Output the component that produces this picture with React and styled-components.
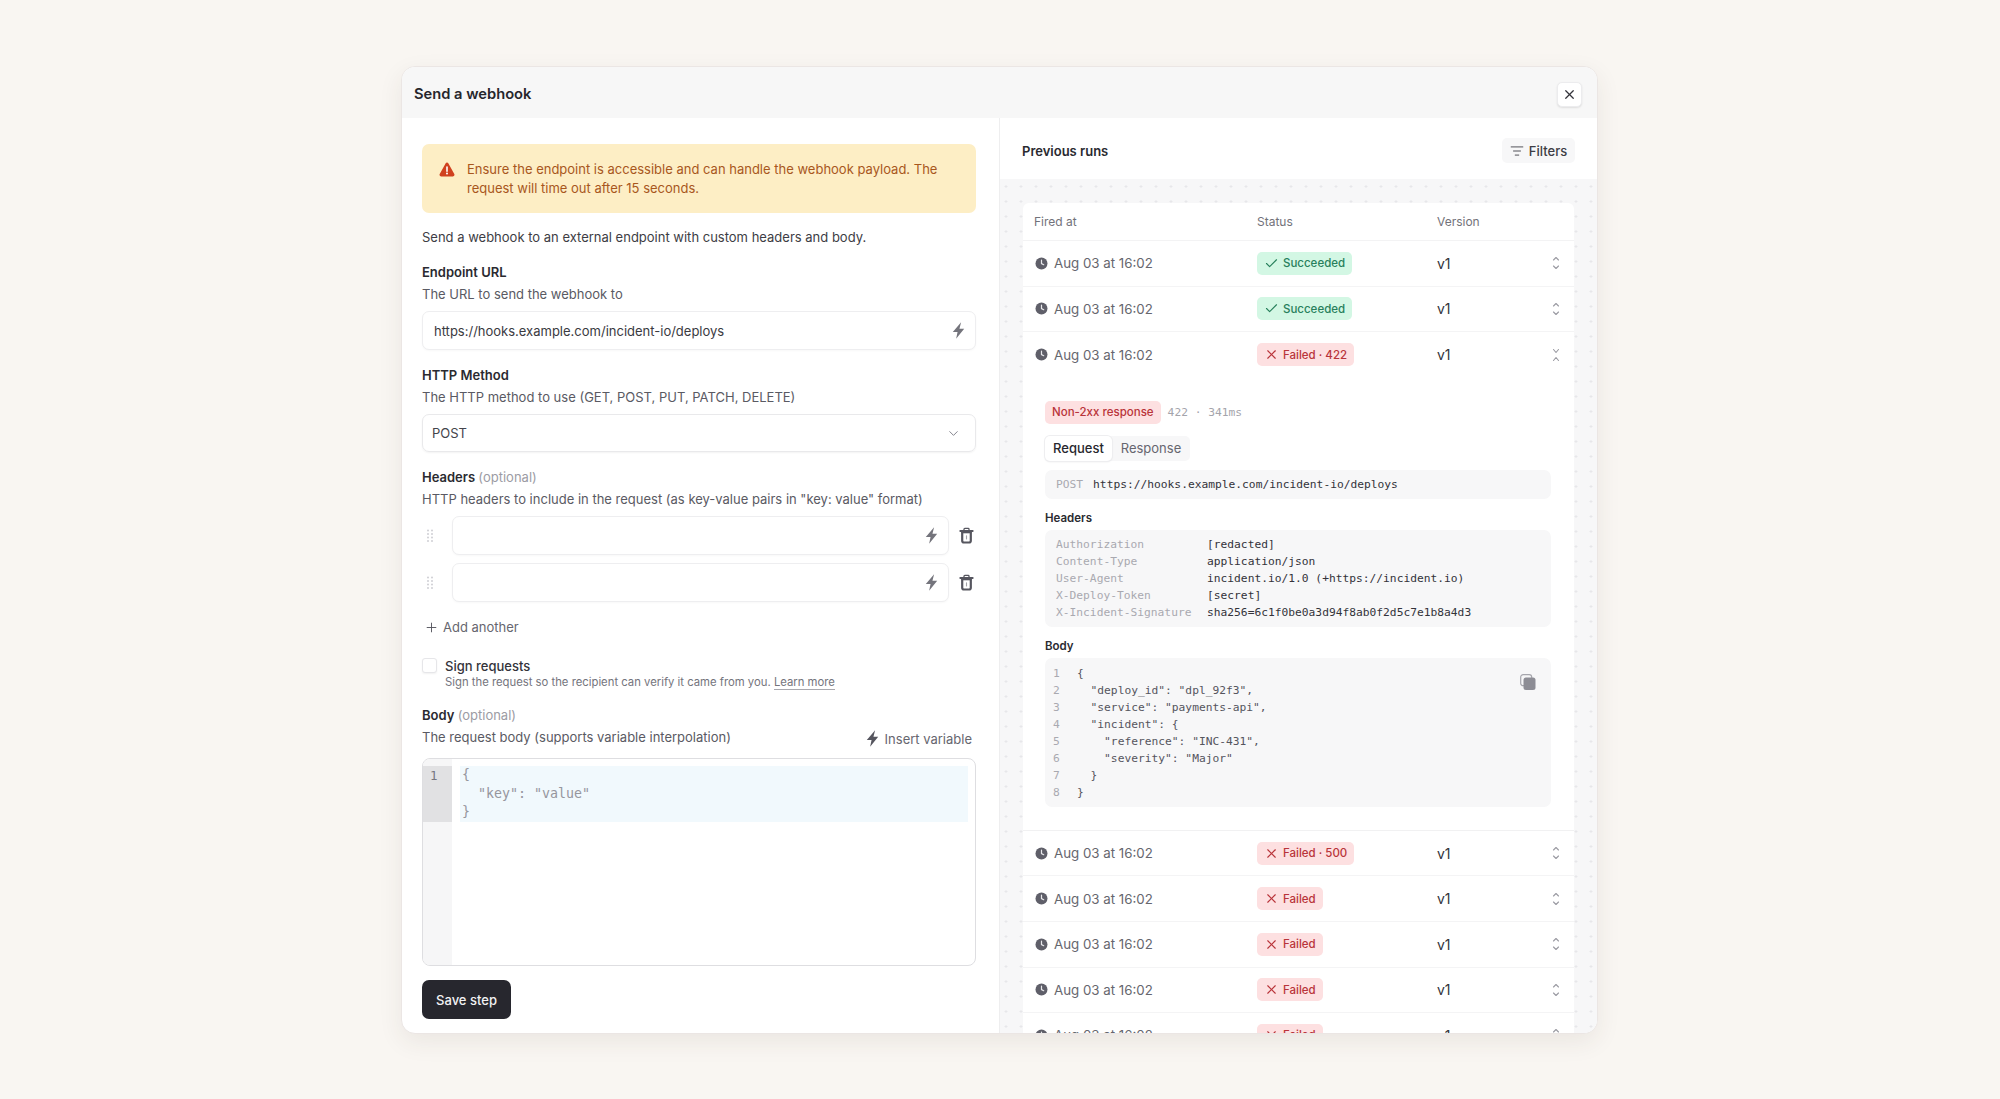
import React from 'react'
import styled, { createGlobalStyle } from 'styled-components'
import { X, Check, Plus, ChevronDown, ListFilter } from 'lucide-react'

const Global = createGlobalStyle`
  * { box-sizing: border-box; }
  html, body { margin: 0; padding: 0; height: 100%; }
  body {
    background: #f9f6f2;
    font-family: Inter, "Noto Sans", sans-serif;
    color: #2a2a30;
  }
`

const BODY_LINES = [
  '{',
  '  "deploy_id": "dpl_92f3",',
  '  "service": "payments-api",',
  '  "incident": {',
  '    "reference": "INC-431",',
  '    "severity": "Major"',
  '  }',
  '}',
]

const HEADER_ROWS = [
  ['Authorization', '[redacted]'],
  ['Content-Type', 'application/json'],
  ['User-Agent', 'incident.io/1.0 (+https://incident.io)'],
  ['X-Deploy-Token', '[secret]'],
  ['X-Incident-Signature', 'sha256=6c1f0be0a3d94f8ab0f2d5c7e1b8a4d3'],
]

function Bolt({ size = 19, color = '#74747c' }) {
  return (
    <svg width={size} height={size} viewBox="0 0 16 16" fill={color}>
      <path d="M10.2 1 3.2 9.3h4L6 15l6.8-8.4H8.8z" />
    </svg>
  )
}

function Trash() {
  return (
    <svg width="15" height="17" viewBox="0 0 15 17" fill="none" stroke="#56565f">
      <path d="M1.3 4h12.4" strokeWidth="1.9" strokeLinecap="round" />
      <path d="M5 3.4V2.2c0-.5.4-.8.8-.8h3.4c.4 0 .8.3.8.8v1.2" strokeWidth="1.3" />
      <path d="M3.2 5v8.8c0 1 .7 1.7 1.7 1.7h5.2c1 0 1.7-.7 1.7-1.7V5" strokeWidth="2.2" />
      <path d="M2.5 5.5h10" strokeWidth="1.6" />
      <path d="M7.5 8.4v4" strokeWidth="1.1" opacity=".55" />
    </svg>
  )
}

function Clock() {
  return (
    <svg width="13" height="13" viewBox="0 0 13 13">
      <circle cx="6.5" cy="6.5" r="6" fill="#5f5f69" />
      <path d="M6.5 3.2v3.4l2.2 1.1" fill="none" stroke="#e9e9ec" strokeWidth="1.2" strokeLinecap="round" />
    </svg>
  )
}

function Warning() {
  return (
    <svg width="16" height="15" viewBox="0 0 16 15">
      <path d="M6.7 1.2a1.5 1.5 0 0 1 2.6 0l6 10.9c.6 1-.2 2.3-1.3 2.3H2c-1.1 0-1.9-1.3-1.3-2.3z" fill="#d0411f" />
      <path d="M8 5v4.3" stroke="#fff" strokeWidth="1.6" strokeLinecap="round" />
      <circle cx="8" cy="11.6" r="1" fill="#fff" />
    </svg>
  )
}

function Expand({ open }) {
  return (
    <svg width="10" height="14" viewBox="0 0 10 14" fill="none" stroke="#9a9aa2" strokeWidth="1.1" strokeLinecap="round" strokeLinejoin="round">
      {open ? <path d="M2.5 1.5 5 4.5l2.5-3M2.5 12.5 5 9.5l2.5 3" /> : <path d="M2.5 4 5 1.5 7.5 4M2.5 10 5 12.5 7.5 10" />}
    </svg>
  )
}

function Grip() {
  return (
    <svg width="8" height="14" viewBox="0 0 8 14" fill="#cfcfd4">
      {[1.5, 5, 8.5, 12].map((y) => (
        <React.Fragment key={y}>
          <circle cx="2" cy={y} r="1" />
          <circle cx="6" cy={y} r="1" />
        </React.Fragment>
      ))}
    </svg>
  )
}

function Copy() {
  return (
    <svg width="18" height="18" viewBox="0 0 18 18">
      <rect x="1.7" y="1.7" width="11" height="11" rx="2.5" fill="none" stroke="#a6a6ad" strokeWidth="1.2" />
      <rect x="4.5" y="4.5" width="12" height="12.5" rx="2.5" fill="#8d8d95" />
    </svg>
  )
}

function Row({ kind, label, open }) {
  return (
    <RunRow $open={open}>
      <FiredAt><Clock />Aug 03 at 16:02</FiredAt>
      <div>
        <Badge $kind={kind}>
          {kind === 'ok' ? <Check size={15} strokeWidth={1.8} /> : <X size={15} strokeWidth={1.8} />}
          {label}
        </Badge>
      </div>
      <VersionCell>v1</VersionCell>
      <ExpandCell><Expand open={open} /></ExpandCell>
    </RunRow>
  )
}

export default function App() {
  return (
    <>
      <Global />
      <Page>
        <Modal>
          <ModalHeader>
            <ModalTitle>Send a webhook</ModalTitle>
            <CloseButton><X size={15} strokeWidth={2} /></CloseButton>
          </ModalHeader>
          <Columns>
            <FormColumn>
              <Alert>
                <AlertIcon><Warning /></AlertIcon>
                <span>Ensure the endpoint is accessible and can handle the webhook payload. The request will time out after 15 seconds.</span>
              </Alert>
              <Intro>Send a webhook to an external endpoint with custom headers and body.</Intro>

              <Label $top={15}>Endpoint URL</Label>
              <Help>The URL to send the webhook to</Help>
              <Input $top={7}>
                https://hooks.example.com/incident-io/deploys
                <Bolt />
              </Input>

              <Label $top={15}>HTTP Method</Label>
              <Help>The HTTP method to use (GET, POST, PUT, PATCH, DELETE)</Help>
              <Select>
                POST
                <ChevronDown size={15} color="#7c7c85" strokeWidth={1.5} />
              </Select>

              <Label $top={15}>Headers <Optional>(optional)</Optional></Label>
              <Help>HTTP headers to include in the request (as key-value pairs in "key: value" format)</Help>
              <HeaderRows>
                {[0, 1].map((i) => (
                  <HeaderRow key={i}>
                    <Grip />
                    <Input $flat><span /><Bolt /></Input>
                    <Trash />
                  </HeaderRow>
                ))}
              </HeaderRows>
              <AddAnother><Plus size={15} strokeWidth={1.5} color="#55555e" />Add another</AddAnother>

              <SignRow>
                <Checkbox />
                <div>
                  <SignLabel>Sign requests</SignLabel>
                  <SignHelp>Sign the request so the recipient can verify it came from you. <LearnMore>Learn more</LearnMore></SignHelp>
                </div>
              </SignRow>

              <Label $top={15}>Body <Optional>(optional)</Optional></Label>
              <BodyHelpRow>
                <Help $top={0}>The request body (supports variable interpolation)</Help>
                <InsertVariable><Bolt color="#55555e" />Insert variable</InsertVariable>
              </BodyHelpRow>
              <Editor>
                <Gutter>
                  <GutterActive>1</GutterActive>
                </Gutter>
                <EditorContent>
                  <ActiveBand>{'{\n  "key": "value"\n}'}</ActiveBand>
                </EditorContent>
              </Editor>
              <SaveButton>Save step</SaveButton>
            </FormColumn>

            <RunsColumn>
              <RunsHeader>
                <RunsTitle>Previous runs</RunsTitle>
                <FiltersButton><ListFilter size={14} strokeWidth={1.5} />Filters</FiltersButton>
              </RunsHeader>
              <RunsBody>
                <RunsCard>
                  <TableHead>
                    <span>Fired at</span>
                    <span>Status</span>
                    <span>Version</span>
                  </TableHead>
                  <Row kind="ok" label="Succeeded" />
                  <Row kind="ok" label="Succeeded" />
                  <Row kind="fail" label="Failed · 422" open />
                  <Detail>
                    <DetailMeta>
                      <Badge $kind="fail">Non-2xx response</Badge>
                      <MetaText>422 · 341ms</MetaText>
                    </DetailMeta>
                    <Tabs>
                      <Tab $active>Request</Tab>
                      <Tab>Response</Tab>
                    </Tabs>
                    <UrlBox><UrlMethod>POST</UrlMethod>https://hooks.example.com/incident-io/deploys</UrlBox>
                    <SectionLabel>Headers</SectionLabel>
                    <HeadersBox>
                      {HEADER_ROWS.map(([k, v]) => (
                        <React.Fragment key={k}>
                          <Muted>{k}</Muted>
                          <span>{v}</span>
                        </React.Fragment>
                      ))}
                    </HeadersBox>
                    <SectionLabel>Body</SectionLabel>
                    <BodyBox>
                      {BODY_LINES.map((line, i) => (
                        <React.Fragment key={i}>
                          <Muted>{i + 1}</Muted>
                          <BodyLine>{line}</BodyLine>
                        </React.Fragment>
                      ))}
                      <CopyButton><Copy /></CopyButton>
                    </BodyBox>
                  </Detail>
                  <Row kind="fail" label="Failed · 500" />
                  <Row kind="fail" label="Failed" />
                  <Row kind="fail" label="Failed" />
                  <Row kind="fail" label="Failed" />
                  <Row kind="fail" label="Failed" />
                </RunsCard>
              </RunsBody>
            </RunsColumn>
          </Columns>
        </Modal>
      </Page>
    </>
  )
}

const Page = styled.div`
  height: 1099px;
  padding: 66px 1px 0 0;
  display: flex;
  justify-content: center;
  align-items: flex-start;
  overflow: hidden;
`
const Modal = styled.div`
  width: 1197px;
  height: 968px;
  background: #fff;
  border: 1px solid #ebe6e4;
  border-radius: 14px;
  box-shadow: 0 8px 24px rgba(60, 50, 40, 0.08);
  overflow: hidden;
  display: flex;
  flex-direction: column;
`
const ModalHeader = styled.div`
  height: 51px;
  flex: none;
  background: #f7f7f7;
  display: flex;
  align-items: center;
  justify-content: space-between;
  padding: 3px 15px 0 12px;
`
const ModalTitle = styled.div`
  font-size: 14.7px;
  font-weight: 600;
  color: #26262c;
`
const CloseButton = styled.div`
  width: 25px;
  height: 25px;
  background: #fff;
  border: 1px solid #ececee;
  border-radius: 5px;
  box-shadow: 0 1px 2px rgba(0, 0, 0, 0.1);
  display: flex;
  align-items: center;
  justify-content: center;
  color: #33333a;
`
const Columns = styled.div`
  flex: 1;
  min-height: 0;
  display: grid;
  grid-template-columns: 598px 1fr;
`
const FormColumn = styled.div`
  padding: 26px 23px 0 20px;
  border-right: 1px solid #eeeeef;
  display: flex;
  flex-direction: column;
`
const Alert = styled.div`
  height: 69px;
  flex: none;
  background: #fdeec5;
  border-radius: 7px;
  padding: 16px 30px 0 45px;
  position: relative;
  font-size: 13px;
  line-height: 19px;
  color: #a8571d;
`
const AlertIcon = styled.div`
  position: absolute;
  left: 17px;
  top: 18px;
  display: flex;
`
const Intro = styled.div`
  margin-top: 14px;
  font-size: 13px;
  line-height: 20px;
  color: #3d3d44;
`
const Label = styled.div`
  margin-top: ${(p) => p.$top}px;
  font-size: 13px;
  line-height: 20px;
  font-weight: 600;
  color: #2a2a30;
`
const Optional = styled.span`
  font-weight: 400;
  color: #9c9ca4;
`
const Help = styled.div`
  margin-top: ${(p) => p.$top ?? 2}px;
  font-size: 13px;
  line-height: 20px;
  color: #5a5a63;
`
const Input = styled.div`
  margin-top: ${(p) => p.$top ?? 0}px;
  height: 39px;
  flex: ${(p) => (p.$flat ? 1 : 'none')};
  background: #fff;
  border: 1px solid #eeeef0;
  border-radius: 7px;
  box-shadow: 0 1px 2px rgba(0, 0, 0, 0.03);
  display: flex;
  align-items: center;
  justify-content: space-between;
  padding: 0 7px 0 11px;
  font-size: 13px;
  color: #3a3a41;
`
const Select = styled.div`
  margin-top: 7px;
  height: 38px;
  flex: none;
  border: 1px solid #e9e9eb;
  border-radius: 7px;
  box-shadow: 0 1px 2px rgba(0, 0, 0, 0.05);
  display: flex;
  align-items: center;
  justify-content: space-between;
  padding: 0 14px 0 9px;
  font-size: 13px;
  color: #44444b;
`
const HeaderRows = styled.div`
  margin-top: 7px;
  display: flex;
  flex-direction: column;
  gap: 8px;
`
const HeaderRow = styled.div`
  display: flex;
  align-items: center;
  padding-left: 4px;
  & > svg:first-child { margin-right: 18px; }
  & > svg:last-child { margin-left: 10px; margin-right: 2px; }
`
const AddAnother = styled.div`
  margin-top: 15px;
  padding-left: 2px;
  display: flex;
  align-items: center;
  gap: 4px;
  font-size: 13px;
  line-height: 20px;
  color: #66666f;
`
const SignRow = styled.div`
  margin-top: 19px;
  display: flex;
  gap: 8px;
`
const Checkbox = styled.div`
  width: 15px;
  height: 15px;
  margin-top: 2px;
  border: 1px solid #e6e6e9;
  border-radius: 3px;
  background: #fff;
  box-shadow: 0 1px 2px rgba(0, 0, 0, 0.06);
`
const SignLabel = styled.div`
  font-size: 13px;
  line-height: 20px;
  font-weight: 500;
  color: #33333a;
`
const SignHelp = styled.div`
  margin-top: -2px;
  font-size: 11.3px;
  line-height: 16px;
  color: #74747c;
`
const LearnMore = styled.span`
  border-bottom: 1px solid #a8a8ae;
`
const BodyHelpRow = styled.div`
  margin-top: 2px;
  display: flex;
  justify-content: space-between;
  align-items: flex-start;
`
const InsertVariable = styled.div`
  display: flex;
  align-items: center;
  gap: 3px;
  padding: 2px 4px 0 0;
  font-size: 13px;
  color: #66666f;
`
const Editor = styled.div`
  margin-top: 10px;
  height: 208px;
  flex: none;
  border: 1px solid #dedee1;
  border-radius: 8px;
  overflow: hidden;
  display: flex;
`
const Gutter = styled.div`
  width: 29px;
  background: #f6f6f7;
  padding-top: 7px;
`
const GutterActive = styled.div`
  height: 56px;
  background: #e1e1e3;
  padding-left: 7px;
  font-family: "DejaVu Sans Mono", monospace;
  font-size: 12.5px;
  line-height: 19px;
  color: #77777f;
`
const EditorContent = styled.div`
  flex: 1;
  padding: 7px 7px 0 8px;
`
const ActiveBand = styled.pre`
  margin: 0;
  height: 56px;
  background: #f1f9fd;
  padding-left: 2px;
  font-family: "DejaVu Sans Mono", monospace;
  font-size: 13.3px;
  line-height: 18.6px;
  color: #96969d;
`
const SaveButton = styled.div`
  margin-top: 14px;
  width: 89px;
  height: 39px;
  flex: none;
  background: #27272e;
  border-radius: 7px;
  display: flex;
  align-items: center;
  justify-content: center;
  font-size: 13px;
  font-weight: 500;
  color: #f2f2f3;
`
const RunsColumn = styled.div`
  min-width: 0;
  display: flex;
  flex-direction: column;
  overflow: hidden;
`
const RunsHeader = styled.div`
  height: 61px;
  flex: none;
  display: flex;
  align-items: center;
  justify-content: space-between;
  padding: 4px 22px 0 22px;
`
const RunsTitle = styled.div`
  font-size: 13px;
  font-weight: 600;
  color: #2a2a30;
`
const FiltersButton = styled.div`
  width: 73px;
  height: 25px;
  background: #f7f7f8;
  border-radius: 5px;
  display: flex;
  align-items: center;
  justify-content: center;
  gap: 5px;
  font-size: 13px;
  font-weight: 500;
  color: #3d3d44;
`
const RunsBody = styled.div`
  flex: 1;
  min-height: 0;
  overflow: hidden;
  padding: 24px 23px 0 23px;
  background-color: #f7f7f8;
  background-image: radial-gradient(circle, #e7e7ea 1px, transparent 1.4px);
  background-size: 15px 15px;
  background-position: -1.5px 0;
`
const RunsCard = styled.div`
  background: #fff;
  border-radius: 6px 6px 0 0;
`
const TableHead = styled.div`
  height: 38px;
  display: grid;
  grid-template-columns: 223px 180px 1fr;
  align-items: center;
  padding-left: 11px;
  border-bottom: 1px solid #f3f3f4;
  font-size: 12px;
  color: #72727a;
`
const RunRow = styled.div`
  height: 45.6px;
  display: grid;
  grid-template-columns: 223px 180px 1fr 20px;
  align-items: center;
  padding: 0 8px 0 11px;
  border-bottom: ${(p) => (p.$open ? 'none' : '1px solid #f4f4f5')};
`
const FiredAt = styled.div`
  display: flex;
  align-items: center;
  gap: 6px;
  padding-left: 1px;
  font-size: 13.3px;
  color: #66666e;
`
const Badge = styled.span`
  display: inline-flex;
  align-items: center;
  gap: 4px;
  height: 23px;
  border-radius: 5px;
  padding: 0 7px;
  font-size: 11.5px;
  font-weight: 500;
  background: ${(p) => (p.$kind === 'ok' ? '#d3f7e4' : '#fde0e1')};
  color: ${(p) => (p.$kind === 'ok' ? '#28805c' : '#b9343a')};
`
const VersionCell = styled.div`
  font-size: 14px;
  color: #33333a;
`
const ExpandCell = styled.div`
  display: flex;
  justify-content: center;
`
const Detail = styled.div`
  padding: 23px 23px 23px 22px;
  border-bottom: 1px solid #f1f1f2;
`
const DetailMeta = styled.div`
  display: flex;
  align-items: center;
  gap: 7px;
`
const MetaText = styled.span`
  font-family: "DejaVu Sans Mono", monospace;
  font-size: 11.25px;
  color: #a4a4ab;
`
const Tabs = styled.div`
  margin-top: 12px;
  width: 145px;
  height: 25px;
  display: flex;
  background: #f7f7f8;
  border-radius: 5px;
`
const Tab = styled.div`
  flex: none;
  width: ${(p) => (p.$active ? '67px' : '78px')};
  display: flex;
  align-items: center;
  justify-content: center;
  border-radius: 5px;
  font-size: 13px;
  font-weight: ${(p) => (p.$active ? 500 : 400)};
  color: ${(p) => (p.$active ? '#27272e' : '#66666f')};
  background: ${(p) => (p.$active ? '#fff' : 'transparent')};
  box-shadow: ${(p) => (p.$active ? '0 0 0 1px #eeeef0, 0 1px 2px rgba(0,0,0,.1)' : 'none')};
`
const monoBox = `
  background: #f7f7f8;
  border-radius: 7px;
  font-family: "DejaVu Sans Mono", monospace;
  font-size: 11.25px;
  line-height: 17px;
  color: #33333a;
`
const UrlBox = styled.div`
  ${monoBox}
  margin-top: 9px;
  height: 29px;
  padding: 6px 11px;
  white-space: pre;
`
const Muted = styled.span`
  color: #a9a9b0;
`
const UrlMethod = styled(Muted)`
  margin-right: 10px;
`
const SectionLabel = styled.div`
  margin-top: 10px;
  font-size: 11.5px;
  line-height: 18px;
  font-weight: 600;
  color: #2a2a30;
`
const HeadersBox = styled.div`
  ${monoBox}
  margin-top: 3px;
  height: 97px;
  padding: 6px 11px;
  display: grid;
  grid-template-columns: 151px 1fr;
  white-space: pre;
`
const BodyBox = styled.div`
  ${monoBox}
  margin-top: 3px;
  height: 149px;
  padding: 7.5px 8px;
  position: relative;
  display: grid;
  grid-template-columns: 24px 1fr;
`
const BodyLine = styled.span`
  white-space: pre;
  color: #55555e;
`
const CopyButton = styled.div`
  position: absolute;
  right: 14px;
  top: 15px;
  display: flex;
`
